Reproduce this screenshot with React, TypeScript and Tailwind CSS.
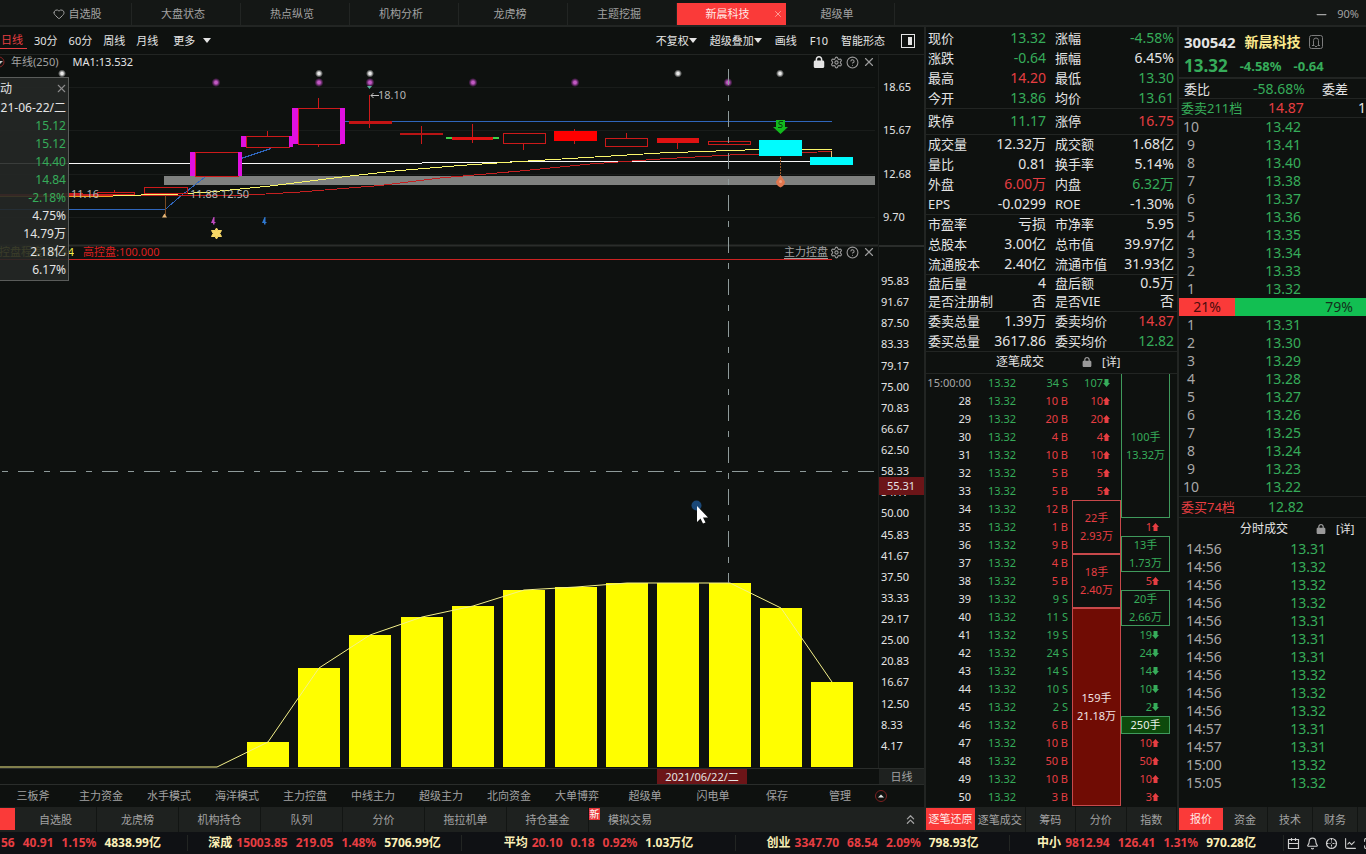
import React from "react";
import {
  Bell,
  ChartLine,
  ChevronsUp,
  CircleHelp,
  Heart,
  Maximize,
  Minus,
  Settings,
  X,
} from "lucide-react";
import { FaLock } from "react-icons/fa6";

const topTabs = [
  "自选股",
  "大盘状态",
  "热点纵览",
  "机构分析",
  "龙虎榜",
  "主题挖掘",
  "新晨科技",
  "超级单",
];

const priceAxis = ["18.65", "15.67", "12.68", "9.70"];

const controlAxis = [
  "95.83", "91.67", "87.50", "83.33", "79.17", "75.00", "70.83", "66.67",
  "62.50", "58.33", "54.17", "50.00", "45.83", "41.67", "37.50", "33.33",
  "29.17", "25.00", "20.83", "16.67", "12.50", "8.33", "4.17",
];

// [x, top] of every yellow bar
const bars = [
  [247, 742], [298, 668], [349, 635], [401, 617], [452, 606], [503, 590],
  [555, 587], [606, 583], [657, 583], [709, 583], [760, 608], [811, 682],
];

const popupRows = [
  ["15.12", "g"],
  ["15.12", "g"],
  ["14.40", "g"],
  ["14.84", "g"],
  ["-2.18%", "g"],
  ["4.75%", "w"],
  ["14.79万", "w"],
  ["2.18亿", "w"],
  ["6.17%", "w"],
];

const tone: Record<string, string> = {
  g: "text-[#36ac5a]",
  r: "text-[#e63e42]",
  w: "text-[#e4e4e4]",
};

const quoteGroups = [
  {
    box: "pt-px leading-5",
    rows: [
      ["现价", "13.32", "g", "涨幅", "-4.58%", "g"],
      ["涨跌", "-0.64", "g", "振幅", "6.45%", "w"],
      ["最高", "14.20", "r", "最低", "13.30", "g"],
      ["今开", "13.86", "g", "均价", "13.61", "g"],
    ],
  },
  {
    box: "pt-[3px] pb-[3px] leading-5",
    rows: [["跌停", "11.17", "g", "涨停", "16.75", "r"]],
  },
  {
    box: "leading-5",
    rows: [
      ["成交量", "12.32万", "w", "成交额", "1.68亿", "w"],
      ["量比", "0.81", "w", "换手率", "5.14%", "w"],
      ["外盘", "6.00万", "r", "内盘", "6.32万", "g"],
      ["EPS", "-0.0299", "w", "ROE", "-1.30%", "w"],
    ],
  },
  {
    box: "leading-5",
    rows: [
      ["市盈率", "亏损", "w", "市净率", "5.95", "w"],
      ["总股本", "3.00亿", "w", "总市值", "39.97亿", "w"],
      ["流通股本", "2.40亿", "w", "流通市值", "31.93亿", "w"],
    ],
  },
  {
    box: "pb-px leading-[18px]",
    rows: [
      ["盘后量", "4", "w", "盘后额", "0.5万", "w"],
      ["是否注册制", "否", "w", "是否VIE", "否", "w"],
    ],
  },
  {
    box: "leading-5",
    rows: [
      ["委卖总量", "1.39万", "w", "委卖均价", "14.87", "r"],
      ["委买总量", "3617.86", "w", "委买均价", "12.82", "g"],
    ],
  },
];

type Cell = {
  span?: number;
  lines?: string[];
  value?: string;
  up?: boolean;
  look?: string;
};

const redBox = "text-[#e63e42] shadow-[inset_0_0_0_1px_#c8494b]";
const greenBox = "text-[#36ac5a] shadow-[inset_0_0_0_1px_#3f9a5c]";

const ticks: { t: string; vol: string; a?: Cell; b?: Cell }[] = [
  {
    t: "15:00:00",
    vol: "34 S",
    a: { value: "107", up: false },
    b: {
      span: 8,
      lines: ["100手", "13.32万"],
      look: "text-[#36ac5a] border-x border-b border-[#3f9a5c]",
    },
  },
  { t: "28", vol: "10 B", a: { value: "10", up: true } },
  { t: "29", vol: "20 B", a: { value: "20", up: true } },
  { t: "30", vol: "4 B", a: { value: "4", up: true } },
  { t: "31", vol: "10 B", a: { value: "10", up: true } },
  { t: "32", vol: "5 B", a: { value: "5", up: true } },
  { t: "33", vol: "5 B", a: { value: "5", up: true } },
  { t: "34", vol: "12 B", a: { span: 3, lines: ["22手", "2.93万"], look: redBox } },
  { t: "35", vol: "1 B", b: { value: "1", up: true } },
  { t: "36", vol: "9 B", b: { span: 2, lines: ["13手", "1.73万"], look: greenBox } },
  { t: "37", vol: "4 B", a: { span: 3, lines: ["18手", "2.40万"], look: redBox } },
  { t: "38", vol: "5 B", b: { value: "5", up: true } },
  { t: "39", vol: "9 S", b: { span: 2, lines: ["20手", "2.66万"], look: greenBox } },
  {
    t: "40",
    vol: "11 S",
    a: {
      span: 11,
      lines: ["159手", "21.18万"],
      look: "text-[#f0e4e4] bg-[#700c04] shadow-[inset_0_0_0_1px_#c8494b]",
    },
  },
  { t: "41", vol: "19 S", b: { value: "19", up: false } },
  { t: "42", vol: "24 S", b: { value: "24", up: false } },
  { t: "43", vol: "14 S", b: { value: "14", up: false } },
  { t: "44", vol: "10 S", b: { value: "10", up: false } },
  { t: "45", vol: "2 S", b: { value: "2", up: false } },
  {
    t: "46",
    vol: "6 B",
    b: {
      span: 1,
      lines: ["250手"],
      look: "text-[#e8f0e8] bg-[#0d4a0c] shadow-[inset_0_0_0_1px_#3f9a5c]",
    },
  },
  { t: "47", vol: "10 B", b: { value: "10", up: true } },
  { t: "48", vol: "50 B", b: { value: "50", up: true } },
  { t: "49", vol: "10 B", b: { value: "10", up: true } },
  { t: "50", vol: "3 B", b: { value: "3", up: true } },
];

const asks = [
  ["10", "13.42"], ["9", "13.41"], ["8", "13.40"], ["7", "13.38"], ["6", "13.37"],
  ["5", "13.36"], ["4", "13.35"], ["3", "13.34"], ["2", "13.33"], ["1", "13.32"],
];

const bids = [
  ["1", "13.31"], ["2", "13.30"], ["3", "13.29"], ["4", "13.28"], ["5", "13.27"],
  ["6", "13.26"], ["7", "13.25"], ["8", "13.24"], ["9", "13.23"], ["10", "13.22"],
];

const trades = [
  ["14:56", "13.31"], ["14:56", "13.32"], ["14:56", "13.32"], ["14:56", "13.32"],
  ["14:56", "13.31"], ["14:56", "13.31"], ["14:56", "13.31"], ["14:56", "13.32"],
  ["14:56", "13.32"], ["14:56", "13.32"], ["14:57", "13.31"], ["14:57", "13.31"],
  ["15:00", "13.32"], ["15:05", "13.32"],
];

const templates = [
  "三板斧", "主力资金", "水手模式", "海洋模式", "主力控盘", "中线主力",
  "超级主力", "北向资金", "大单博弈", "超级单", "闪电单",
];

const leftTabs = ["自选股", "龙虎榜", "机构持仓", "队列", "分价", "拖拉机单", "持仓基金"];

const indexes = [
  ["深成", "15003.85", "219.05", "1.48%", "5706.99亿"],
  ["平均", "20.10", "0.18", "0.92%", "1.03万亿"],
  ["创业", "3347.70", "68.54", "2.09%", "798.93亿"],
  ["中小", "9812.94", "126.41", "1.31%", "970.28亿"],
];

const Caret = () => (
  <svg className="inline-block" width="8" height="5" viewBox="0 0 8 5">
    <path d="M0 0h8L4 5z" fill="currentColor" />
  </svg>
);

const Arrow = ({ up }: { up?: boolean }) => (
  <svg
    className={up ? "inline-block align-baseline" : "inline-block rotate-180 align-baseline"}
    width="7"
    height="8"
    viewBox="0 0 7 8"
  >
    <path d="M3.5 0L7 4H5.500V8H1.500V4H0z" fill="currentColor" />
  </svg>
);

const TickCell = ({ cell }: { cell: Cell }) => {
  if (cell.lines) {
    return (
      <td rowSpan={cell.span} className={`text-center align-middle ${cell.look}`}>
        {cell.lines.map((line) => (
          <p key={line}>{line}</p>
        ))}
      </td>
    );
  }
  return (
    <td className={`pr-[11px] text-right ${cell.up ? tone.r : tone.g}`}>
      {cell.value}
      <Arrow up={cell.up} />
    </td>
  );
};

const PanelIcons = () => (
  <div className="flex items-center gap-[3px] text-[#9a9a9a]">
    <button aria-label="设置">
      <Settings size={13} strokeWidth={2} />
    </button>
    <button aria-label="帮助">
      <CircleHelp size={13} strokeWidth={2} />
    </button>
    <button aria-label="关闭">
      <X size={14} strokeWidth={2} />
    </button>
  </div>
);

const Charts = () => (
  <svg
    className="absolute inset-0 h-full w-full"
    viewBox="0 55 878 713"
    preserveAspectRatio="xMaxYMin meet"
  >
    <defs>
      <radialGradient id="dotWhite">
        <stop offset="0.3" stopColor="#e8e8e8" />
        <stop offset="1" stopColor="#e8e8e8" stopOpacity="0" />
      </radialGradient>
      <radialGradient id="dotPink">
        <stop offset="0.3" stopColor="#c25ac4" />
        <stop offset="1" stopColor="#a02aa8" stopOpacity="0" />
      </radialGradient>
    </defs>

    {/* grid */}
    <g stroke="#191c1a">
      {[87.5, 130.5, 174.5, 217.5].map((y) => (
        <line key={y} x1="0" x2="875" y1={y} y2={y} />
      ))}
    </g>
    <line x1="0" x2="878" y1="245.5" y2="245.5" stroke="#2a2d2b" strokeWidth="2" />

    {/* main chart lines */}
    <rect x="164" y="176" width="711" height="9" fill="#7f817f" />
    <g fill="none" shapeRendering="crispEdges">
      <path d="M0 209.500H165L182 195L205 177M241 158.500L271 148.500M345 121.500H832" stroke="#2f66bc" />
      <path d="M0 163.500H422M422 162.500H510M510 161.500H810" stroke="#f8f8f8" />
      <path d="M0 195.500H240L300 192L380 185.500L440 178L520 171L590 164L660 159L730 155L760 154L832 151.500" stroke="#c42020" />
      <path d="M0 194.500H100" stroke="#c42020" />
      <path d="M0 196.500H113" stroke="#f0a020" />
      <path d="M113 195.500L170 194.500L210 192L270 186L350 176L400 170.500L460 165.500L520 161.500L570 158.500L660 153L730 150.500L760 149.500H832" stroke="#faf66a" />
    </g>

    {/* candles */}
    <g shapeRendering="crispEdges">
      <g fill="none" stroke="#cc1a1a">
        <path d="M62 193.500H83M97 192.500H134V194.500H97zM114.500 190V192M144.500 187.500H187.500V193.500H144.500z" />
        <path d="M195.500 152.500H238.500V176.500H195.500z" fill="#0e110f" />
        <path d="M246.500 136.500H289.500V147.500H246.500zM267.500 131V136" />
        <path d="M298.500 108.500H340.500V144.500H298.500zM318.500 98V108M318.500 144V147" />
        <path d="M369.500 95V128M421.500 126V144M472.500 124V143" />
        <path d="M503.500 133.500H545.500V143.500H503.500zM523.500 144V150" />
        <path d="M605.500 138.500H647.500V146.500H605.500zM626.500 133V138" />
        <path d="M677.500 143V149M574.500 129V144M708.500 141.500H750.500V144.500H708.500z" />
      </g>
      <path d="M165.500 195V215" stroke="#7a4a22" />
      <g fill="#e010e0">
        <rect x="190" y="152" width="5" height="24" />
        <rect x="238" y="152" width="4" height="24" />
        <rect x="241" y="136" width="5" height="11" />
        <rect x="289" y="136" width="4" height="11" />
        <rect x="292" y="108" width="6" height="36" />
        <rect x="340" y="108" width="5" height="36" />
      </g>
      <rect x="349" y="121" width="43" height="3" fill="#c41414" />
      <rect x="400" y="133" width="43" height="2" fill="#b81414" />
      <path d="M446 138H499" stroke="#3fd24a" strokeWidth="2" />
      <rect x="452" y="137" width="41" height="3" fill="#e01212" />
      <rect x="554" y="131" width="43" height="10" fill="#fe0000" />
      <rect x="657" y="138" width="42" height="5" fill="#e01212" />
      <path d="M831.500 151V157" stroke="#e8c070" />
      <path d="M780.500 157V177" stroke="#9a5a2a" strokeDasharray="2 1" />
      <rect x="759" y="140" width="43" height="16" fill="#00fcfe" />
      <rect x="810" y="157" width="43" height="8" fill="#00fcfe" />
    </g>

    {/* markers */}
    {[62, 319, 370, 678, 780].map((x) => (
      <circle key={x} cx={x} cy="73.500" r="4" fill="url(#dotWhite)" />
    ))}
    {[216, 319, 370, 473, 575, 728].map((x) => (
      <circle key={x} cx={x} cy="82.500" r="4.500" fill="url(#dotPink)" />
    ))}
    <path d="M367 86h5l-2.500 3z" fill="#58b09a" />
    <path d="M162 217.500h5l-2.500-4z" fill="#e8b878" />
    <path d="M213.500 217h1v5h1v1h-1v1.500h-1.500v-1.500h-2z" fill="#c04ac0" />
    <path d="M264.500 217h1v5h1v1h-1v1.500h-1.500v-1.500h-2z" fill="#2f78d0" />
    <path
      d="M216.500 228L218 230.500L221.500 230.500L219.800 233.500L221.500 236.500L218 236.500L216.500 239L215 236.500L211.500 236.500L213.200 233.500L211.500 230.500L215 230.500z"
      fill="#f6d766"
      stroke="#f6d766"
    />
    <path d="M776 120h9v7h3l-7.500 7l-7.500-7h3z" fill="#12b91e" />
    <path d="M783 121.500h-3.500q-1.500 1.500 0 3h2q1.500 1.500 0 3h-3.500" fill="none" stroke="#06400a" />
    <path d="M780.500 175l4.500 6.500c0 3-2 5-4.500 6c-2.500-1-4.500-3-4.500-6z" fill="#e0764e" />
    <circle cx="780.500" cy="181.500" r="1.500" fill="#f0a080" />

    <path d="M379 95.500H371M373.500 93L371 95.500L373.500 98" fill="none" stroke="#c4c4c4" />
    <g fontSize="11" fill="#b4b4b4">
      <text x="378" y="99">18.10</text>
      <text x="71" y="198">11.16</text>
      <text x="190" y="198">11.88 12.50</text>
    </g>

    {/* control ratio chart */}
    <path d="M0 259.500H832" stroke="#cc2222" shapeRendering="crispEdges" />
    <g fill="#fffe00" shapeRendering="crispEdges">
      {bars.map(([x, y]) => (
        <rect key={x} x={x} y={y} width="42" height={767 - y} />
      ))}
    </g>
    <polyline
      points={"0,767 217,767 " + bars.map(([x, y]) => `${x + 21},${y}`).join(" ")}
      fill="none"
      stroke="#f4f08a"
    />

    {/* crosshair */}
    <g stroke="#8e9a9a" strokeDasharray="16 10 6 10" shapeRendering="crispEdges">
      <path d="M728.500 69V583" />
      <path d="M0 471.500H878" strokeDashoffset="24" />
    </g>
    <circle cx="696.500" cy="505.500" r="5" fill="#1a4878" />
    <path d="M697 506v16l3.500-3.500l2.500 5l2.500-1l-2.500-5h5z" fill="#fff" />
  </svg>
);

const BookRow = ({ row }: { row: string[] }) => (
  <tr className="h-[18px]">
    <td className="w-6 text-center text-[#a8a8a8]">{row[0]}</td>
    <td className="pr-[65px] text-right text-[#36ac5a]">{row[1]}</td>
  </tr>
);

const App = () => {
  return (
    <div className="flex min-h-screen flex-col overflow-hidden whitespace-nowrap bg-[#0e110f] font-['Noto_Sans','Noto_Sans_CJK_SC',sans-serif] text-[11px] leading-4 text-[#e4e4e4]">
      {/* Top tabs */}
      <header className="flex h-[27px] items-stretch border-b-2 border-[#222523] bg-[#141715] pt-[3px] text-[#a2a2a2]">
        <nav className="flex flex-1 pl-[23px]">
          {topTabs.map((tab) => (
            <button
              key={tab}
              className={
                tab === "新晨科技"
                  ? "relative w-[109px] bg-[#fa3a39] pr-2 text-[#ffe9e6]"
                  : "flex w-[109px] items-center justify-center gap-1 border-r border-[#222523] pr-[6px] first:pr-0"
              }
            >
              {tab === "自选股" && <Heart size={12} />}
              {tab}
              {tab === "新晨科技" && (
                <X size={10} className="absolute top-[6px] right-[3px] text-[#ffb0a8]" />
              )}
            </button>
          ))}
        </nav>
        <div className="flex items-center gap-2 pr-[7px]">
          <button aria-label="缩小">
            <Minus size={15} />
          </button>
          <span>90%</span>
        </div>
      </header>

      <div className="flex flex-1">
        {/* Chart column */}
        <main className="flex min-w-0 flex-1 flex-col border-r-2 border-[#222523]">
          <div className="flex h-7 items-center border-b border-[#222523] pr-[9px]">
            <div className="flex flex-1 items-center gap-[11px]">
              <button className="border-b border-[#e63e42] pr-1 pl-px text-[#e63e42]">日线</button>
              <button className="-ml-1">30分</button>
              <button>60分</button>
              <button>周线</button>
              <button>月线</button>
              <button className="ml-1 flex items-center gap-2">
                更多 <Caret />
              </button>
            </div>
            <div className="flex items-center gap-[13px]">
              <button className="flex items-center">
                不复权
                <Caret />
              </button>
              <button className="flex items-center">
                超级叠加
                <Caret />
              </button>
              <button>画线</button>
              <button>F10</button>
              <button>智能形态</button>
              <button aria-label="侧栏" className="ml-[3px]">
                <svg width="14" height="14" viewBox="0 0 14 14">
                  <rect x="0.5" y="0.5" width="13" height="13" fill="none" stroke="#e4e4e4" />
                  <rect x="7" y="3" width="4" height="8" fill="#e4e4e4" />
                </svg>
              </button>
            </div>
          </div>

          <div className="flex flex-1">
            <div className="relative flex-1">
              <Charts />
              <div className="absolute inset-x-0 top-0 flex h-[14px] items-center justify-between pr-[2px]">
                <div className="flex items-center">
                  <svg width="5" height="12" viewBox="0 0 5 12">
                    <circle cx="-1" cy="6" r="5" fill="none" stroke="#8a2424" />
                    <path d="M0 5h3l-3 3z" fill="#c8c8c8" />
                  </svg>
                  <span className="pl-[6px] text-[#a2a2a2]">年线(250)</span>
                  <span className="pl-[14px]">MA1:13.532</span>
                </div>
                <div className="flex items-center gap-[5px]">
                  <FaLock size={12} />
                  <PanelIcons />
                </div>
              </div>
              <div className="absolute inset-x-0 top-[189px] flex items-center justify-between pr-[2px]">
                <div className="flex items-center">
                  <div className="flex w-[74px] justify-end overflow-hidden text-[#f3ee4c]">
                    控盘程度:36.44
                  </div>
                  <span className="pl-[9px] text-[#dc1f1f]">高控盘:100.000</span>
                </div>
                <div className="flex items-center gap-[2px]">
                  <button className="text-[#a2a2a2] underline underline-offset-2">主力控盘</button>
                  <PanelIcons />
                </div>
              </div>

              {/* Day details */}
              <div className="absolute top-[22px] left-0 w-[69px] border-y border-r border-[#5a5c5a] bg-[#252826]/90 pb-px text-xs leading-[18px]">
                <div className="flex h-[21px] items-center justify-between">
                  <span>动</span>
                  <button aria-label="关闭" className="text-[#8c8c8c]">
                    <X size={13} />
                  </button>
                </div>
                <p className="pr-[2px] text-right">21-06-22/二</p>
                {popupRows.map(([value, color], i) => (
                  <p key={i} className={`pr-[2px] text-right ${tone[color]}`}>
                    {value}
                  </p>
                ))}
              </div>
            </div>

            {/* Value axis */}
            <div className="relative flex w-[46px] flex-col border-l border-[#1d201e] pl-1">
              <div className="flex h-[190px] flex-col justify-between pt-6 pb-5">
                {priceAxis.map((v) => (
                  <span key={v}>{v}</span>
                ))}
              </div>
              <div className="-ml-1 flex flex-1 flex-col justify-between border-t-2 border-[#2a2d2b] pt-[26px] pb-[14px] pl-[2px]">
                {controlAxis.map((v) => (
                  <span key={v}>{v}</span>
                ))}
              </div>
              <div className="absolute top-[422px] left-0 h-[18px] w-full bg-[#6c1518] pl-2 leading-[18px]">
                55.31
              </div>
            </div>
          </div>

          <div className="relative flex h-[17px] justify-end border-y border-[#2a2d2b]">
            <div className="absolute top-0 left-[657px] h-[15px] w-[90px] bg-[#6c1518] text-center leading-[15px]">
              2021/06/22/二
            </div>
            <button className="w-[45px] bg-[#1e211f] leading-[15px] text-[#a2a2a2]">日线</button>
          </div>

          <div className="flex h-[22px] items-center text-[#a2a2a2]">
            {templates.map((t) => (
              <button key={t} className="w-[68px] pr-[2px]">
                {t}
              </button>
            ))}
            <button className="w-[60px] pr-[2px]">保存</button>
            <button className="w-[64px]">管理</button>
            <button aria-label="展开" className="pl-[3px]">
              <svg width="12" height="12" viewBox="0 0 12 12">
                <circle cx="6" cy="6" r="5.5" fill="none" stroke="#7c2020" />
                <path d="M3 7.500h6L6 4.500z" fill="#e4e4e4" />
              </svg>
            </button>
          </div>

          <nav className="flex h-[25px] items-stretch bg-[#1e211f] text-[#a2a2a2]">
            <span className="mt-px mb-[2px] w-[15px] bg-[#fa3a39]" />
            {leftTabs.map((t) => (
              <button key={t} className="w-[82px] border-r border-[#121513] last:border-0">
                {t}
              </button>
            ))}
            <button className="flex items-start gap-2">
              <span className="mt-px h-3 w-[11px] bg-[#e8383a] text-center text-[10px] leading-3 text-white">
                新
              </span>
              <span className="self-center">模拟交易</span>
            </button>
            <button aria-label="收起" className="ml-auto pr-[6px]">
              <ChevronsUp size={15} strokeWidth={2} />
            </button>
          </nav>
        </main>

        {/* Quote details */}
        <section className="flex w-[253px] flex-col border-r-2 border-[#222523]">
          {quoteGroups.map((group, i) => (
            <dl
              key={i}
              className={`-mb-px grid grid-cols-[auto_1fr_auto_1fr] border-b border-[#222523] pr-[3px] pl-[2px] ${group.box}`}
            >
              {group.rows.map(([l1, v1, c1, l2, v2, c2]) => (
                <React.Fragment key={l1}>
                  <dt className="w-[66px] text-[13px]">{l1}</dt>
                  <dd className={`w-[52px] text-right text-sm leading-[inherit] ${tone[c1]}`}>
                    {v1}
                  </dd>
                  <dt className="w-[58px] text-[13px]">{l2}</dt>
                  <dd className={`text-right text-sm leading-[inherit] ${tone[c2]}`}>{v2}</dd>
                </React.Fragment>
              ))}
            </dl>
          ))}

          <div className="flex h-[23px] items-center border-b border-[#222523] pl-[70px] text-xs">
            <h2>逐笔成交</h2>
            <FaLock size={10} className="ml-[38px] text-[#9a9a9a]" />
            <button className="ml-[10px] text-[11px]">[详]</button>
          </div>

          <table className="w-[244px] table-fixed border-separate border-spacing-0 leading-[18px]">
            <colgroup>
              <col className="w-[45px]" />
              <col className="w-[45px]" />
              <col className="w-[56px]" />
              <col className="w-[49px]" />
              <col className="w-[49px]" />
            </colgroup>
            <tbody>
              {ticks.map((tick, i) => (
                <tr key={tick.t} className="h-[18px]">
                  <td className={i === 0 ? "text-right text-[#a8a8a8]" : "text-right"}>{tick.t}</td>
                  <td className="text-right text-[#36ac5a]">13.32</td>
                  <td
                    className={`pr-1 text-right ${tick.vol.endsWith("S") ? tone.g : tone.r}`}
                  >
                    {tick.vol}
                  </td>
                  {tick.a && <TickCell cell={tick.a} />}
                  {tick.b && <TickCell cell={tick.b} />}
                </tr>
              ))}
            </tbody>
          </table>

          <nav className="mt-auto flex h-[25px] items-stretch bg-[#1e211f] text-[#a2a2a2]">
            <button className="mt-px mb-[2px] w-[49px] bg-[#fa3a39] text-[#ffe9e6]">逐笔还原</button>
            {["逐笔成交", "筹码", "分价", "指数"].map((t) => (
              <button key={t} className="flex-1 border-r border-[#121513]">
                {t}
              </button>
            ))}
          </nav>
        </section>

        {/* Order book */}
        <aside className="flex w-[187px] flex-col overflow-hidden">
          <div className="flex h-7 items-center gap-[9px] pt-px pl-[5px] font-bold">
            <span className="text-[15px]">300542</span>
            <h1 className="text-sm text-[#fbe98c]">新晨科技</h1>
            <svg width="14" height="14" viewBox="0 0 14 14" fill="none" stroke="#7c7c7c">
              <rect x="0.5" y="0.5" width="13" height="13" rx="2" />
              <path d="M3 10.500h2.500M8.500 10.500H11M4.500 10V5.500a2.500 2.500 0 0 1 5 0V10M6 11.500h2" />
            </svg>
          </div>
          <div className="flex h-6 items-center gap-3 border-b-2 border-[#222523] pl-[5px] font-bold text-[#36ac5a]">
            <span className="text-[17px]">13.32</span>
            <span className="text-[13px]">-4.58%</span>
            <span className="text-[13px]">-0.64</span>
          </div>
          <div className="flex h-5 items-center border-b border-[#222523] pl-[5px] text-[13px]">
            <span className="w-[69px]">委比</span>
            <span className="w-[69px] text-sm text-[#36ac5a]">-58.68%</span>
            <span>委差</span>
          </div>
          <div className="flex h-[19px] items-center border-b border-[#222523] pl-[2px] text-[13px] text-[#36ac5a]">
            <span className="w-[87px]">委卖211档</span>
            <span className="w-[90px] text-sm text-[#e63e42]">14.87</span>
            <span className="text-sm text-[#e4e4e4]">1</span>
          </div>

          <table className="w-full text-sm leading-[18px]">
            <tbody>
              {asks.map((row) => (
                <BookRow key={row[0]} row={row} />
              ))}
            </tbody>
          </table>
          <div className="flex h-[18px] text-sm leading-[18px] text-[#14301c]">
            <span className="w-[30%] bg-[#fa3a39] text-center text-[#4a0c0c]">21%</span>
            <span className="flex-1 bg-[#12bf52] pr-[13px] text-right">79%</span>
          </div>
          <table className="w-full text-sm leading-[18px]">
            <tbody>
              {bids.map((row) => (
                <BookRow key={row[0]} row={row} />
              ))}
            </tbody>
          </table>

          <div className="flex h-[22px] items-center border-y border-[#222523] pl-[2px] text-[13px] text-[#e63e42]">
            <span className="w-[87px]">委买74档</span>
            <span className="text-sm text-[#36ac5a]">12.82</span>
          </div>
          <div className="flex h-[22px] items-center pl-[61px] text-xs">
            <h2>分时成交</h2>
            <FaLock size={10} className="ml-7 text-[#9a9a9a]" />
            <button className="ml-[10px] text-[11px]">[详]</button>
          </div>
          <table className="w-full text-sm leading-[18px]">
            <tbody>
              {trades.map(([time, price], i) => (
                <tr key={i} className="h-[18px]">
                  <td className="pl-[7px] text-[#a8a8a8]">{time}</td>
                  <td className="pr-10 text-right text-[#36ac5a]">{price}</td>
                </tr>
              ))}
            </tbody>
          </table>

          <nav className="mt-auto flex h-[25px] items-stretch bg-[#1e211f] text-[#a2a2a2]">
            <button className="mt-px mb-[2px] w-11 bg-[#fa3a39] text-[#ffe9e6]">报价</button>
            {["资金", "技术", "财务"].map((t) => (
              <button key={t} className="w-[45px] border-r border-[#121513]">
                {t}
              </button>
            ))}
          </nav>
        </aside>
      </div>

      {/* Index ticker */}
      <footer className="flex h-[22px] items-center overflow-hidden bg-[#0f1114] text-xs font-bold text-[#e63e42]">
        <div className="flex w-[188px] shrink-0 gap-2 border-r border-[#222523] pl-px">
          <span>56</span>
          <span>40.91</span>
          <span>1.15%</span>
          <span className="text-[#fbf0b8]">4838.99亿</span>
        </div>
        {indexes.map(([name, last, diff, pct, amount]) => (
          <div
            key={name}
            className="flex w-[274px] shrink-0 justify-center gap-2 border-r border-[#222523] last:border-0"
          >
            <span>
              <span className="pr-1 text-[#fbf0b8]">{name}</span>
              {last}
            </span>
            <span>{diff}</span>
            <span>{pct}</span>
            <span className="text-[#fbf0b8]">{amount}</span>
          </div>
        ))}
        <div className="flex flex-1 gap-[6px] overflow-hidden pl-[3px] text-[#d0d0d0]">
          <svg className="shrink-0" width="13" height="13" viewBox="0 0 13 13" fill="none" stroke="currentColor">
            <path d="M1.500 2.500h10v9h-10zM1.500 6.500h10M4.500 1v3M8.500 1v3" strokeWidth="1.200" />
          </svg>
          <Bell size={13} className="shrink-0" />
          <svg className="shrink-0" width="13" height="13" viewBox="0 0 13 13" fill="none" stroke="currentColor">
            <circle cx="6.500" cy="6.500" r="5" strokeWidth="1.200" />
            <path d="M6.500 1.500v4M6.500 7.500v4M1.500 6.500h4M7.500 6.500h4" strokeDasharray="2 1" />
          </svg>
          <ChartLine size={13} className="shrink-0" />
          <Maximize size={13} className="shrink-0" />
        </div>
      </footer>
    </div>
  );
};

export default App;
